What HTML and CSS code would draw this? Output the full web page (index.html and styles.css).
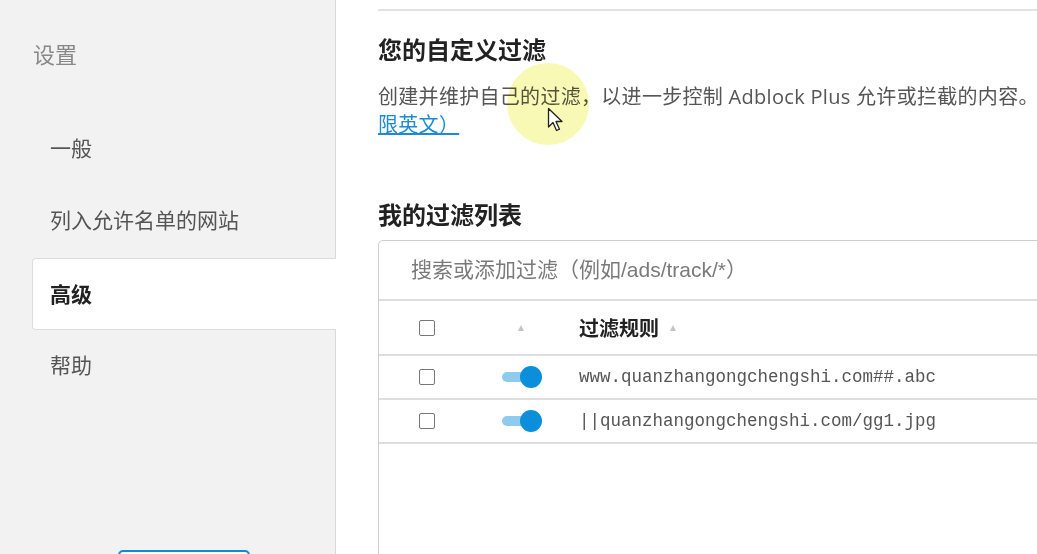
FILE: index.html
```html
<!DOCTYPE html>
<html lang="zh-CN">
<head>
    <meta charset="UTF-8">
    <meta name="viewport" content="width=device-width, initial-scale=1.0">
    <title>Adblock Plus 设置</title>
    <link rel="stylesheet" href="styles.css">
</head>
<body>
    <aside class="sidebar">
        <h1 class="sidebar-title">设置</h1>
        <ul class="nav">
            <li class="nav-item">一般</li>
            <li class="nav-item">列入允许名单的网站</li>
            <li class="nav-item active">高级</li>
            <li class="nav-item">帮助</li>
        </ul>
        <button class="contribute" type="button"></button>
    </aside>

    <main class="content">
        <div class="top-rule"></div>

        <section class="section">
            <h2>您的自定义过滤</h2>
            <p class="desc">创建并维护自己的过滤，以进一步控制 Adblock Plus 允许或拦截的内容。<a class="link" href="#">限英文）</a></p>
        </section>

        <section class="section list-section">
            <h2>我的过滤列表</h2>
            <div class="filter-box">
                <input class="search" type="text" placeholder="搜索或添加过滤（例如/ads/track/*）">
                <div class="row head">
                    <div class="cell-check"><span class="checkbox"></span></div>
                    <div class="cell-toggle"><span class="sort"></span></div>
                    <div class="cell-rule">过滤规则<span class="sort"></span></div>
                </div>
                <div class="row">
                    <div class="cell-check"><span class="checkbox"></span></div>
                    <div class="cell-toggle"><span class="toggle"></span></div>
                    <div class="cell-rule mono">www.quanzhangongchengshi.com##.abc</div>
                </div>
                <div class="row">
                    <div class="cell-check"><span class="checkbox"></span></div>
                    <div class="cell-toggle"><span class="toggle"></span></div>
                    <div class="cell-rule mono">||quanzhangongchengshi.com/gg1.jpg</div>
                </div>
            </div>
        </section>

        <!-- screen recorder cursor highlight -->
        <div class="cursor-glow"></div>
        <svg class="cursor" width="18" height="26" viewBox="0 0 18 26">
            <path d="M1.5 1.5 L1.5 20 L6 15.5 L9.5 23.5 L12.5 22.2 L9 14.5 L15 14.5 Z" fill="#fff" stroke="#222" stroke-width="1.3" stroke-linejoin="round"/>
        </svg>
    </main>
</body>
</html>
```

FILE: styles.css
```css
body {
    margin: 0;
    height: 554px;
    overflow: hidden;
    display: flex;
    font-family: "Open Sans", "Noto Sans CJK SC", sans-serif;
    background-color: #fff;
    color: #333;
}

.sidebar {
    width: 335px;
    flex-shrink: 0;
    background-color: #f2f2f2;
    border-right: 1px solid #d9d9d9;
    display: flex;
    flex-direction: column;
}

.sidebar-title {
    margin: 40px 0 0 33px;
    font-size: 22px;
    line-height: 28px;
    font-weight: normal;
    color: #888;
}

.nav {
    list-style: none;
    margin: 44px 0 0 32px;
    padding: 0;
}

.nav-item {
    height: 72px;
    line-height: 72px;
    padding-left: 18px;
    font-size: 21px;
    color: #555;
    box-sizing: border-box;
}

.nav-item.active {
    margin-top: 2px;
    margin-bottom: -1px;
    background-color: #fff;
    border: 1px solid #dcdcdc;
    border-right: none;
    border-radius: 4px 0 0 4px;
    margin-right: -1px;
    padding-left: 17px;
    line-height: 70px;
    font-weight: bold;
    color: #222;
}

.contribute {
    margin: 149px 0 0 118px;
    width: 132px;
    height: 40px;
    border: 2px solid #0a8ed9;
    border-radius: 5px;
    background: #fff;
    flex-shrink: 0;
}

.content {
    position: relative;
    flex: 1;
    padding-left: 42px;
    margin-right: -20px;
}

.top-rule {
    margin-top: 9px;
    border-top: 2px solid #e2e2e2;
}

.section h2 {
    margin: 0;
    font-size: 24px;
    line-height: 32px;
    color: #222;
}

.section:first-of-type h2 {
    margin-top: 23px;
}

.desc {
    max-width: 672px;
    margin: 17px 0 0;
    font-size: 20px;
    line-height: 28px;
    letter-spacing: 0.3px;
    color: #555;
}

.link {
    color: #1d8ad6;
}

.list-section {
    margin-top: 60px;
}

.filter-box {
    margin-top: 9px;
    border: 1px solid #cfcfcf;
    border-radius: 5px 0 0 0;
    height: 400px;
}

.search {
    display: block;
    width: 100%;
    box-sizing: border-box;
    height: 60px;
    border: none;
    border-bottom: 2px solid #dedede;
    border-radius: 5px 0 0 0;
    padding: 0 0 0 32px;
    font-family: "Liberation Sans", "Noto Sans CJK SC", sans-serif;
    font-size: 21px;
    outline: none;
}

.search::placeholder {
    color: #7a7a7a;
}

.row {
    display: flex;
    align-items: center;
    height: 42px;
    border-bottom: 2px solid #dedede;
}

.row.head {
    height: 53px;
}

.cell-check {
    width: 96px;
    display: flex;
    justify-content: center;
}

.cell-toggle {
    width: 92px;
    display: flex;
    justify-content: center;
}

.cell-rule {
    padding-left: 12px;
    font-size: 20px;
    font-weight: bold;
    color: #222;
    display: flex;
    align-items: center;
    gap: 11px;
}

.cell-rule.mono {
    font-family: "Liberation Mono", monospace;
    font-size: 17.5px;
    font-weight: normal;
    color: #555;
}

.checkbox {
    width: 14px;
    height: 14px;
    border: 1px solid #777;
    border-radius: 2px;
    background: #fff;
}

.sort {
    width: 0;
    height: 0;
    border-left: 3px solid transparent;
    border-right: 3px solid transparent;
    border-bottom: 6px solid #c4c4c4;
}

.toggle {
    position: relative;
    width: 38px;
    height: 10px;
    border-radius: 5px;
    background-color: #8ecbec;
}

.toggle::after {
    content: "";
    position: absolute;
    right: -2px;
    top: -6px;
    width: 22px;
    height: 22px;
    border-radius: 50%;
    background-color: #0b8fdb;
}

.cursor-glow {
    position: absolute;
    left: 171px;
    top: 63px;
    width: 82px;
    height: 82px;
    border-radius: 50%;
    background-color: rgba(244, 244, 110, 0.5);
    mix-blend-mode: multiply;
}

.cursor {
    position: absolute;
    left: 211px;
    top: 107px;
}
```
